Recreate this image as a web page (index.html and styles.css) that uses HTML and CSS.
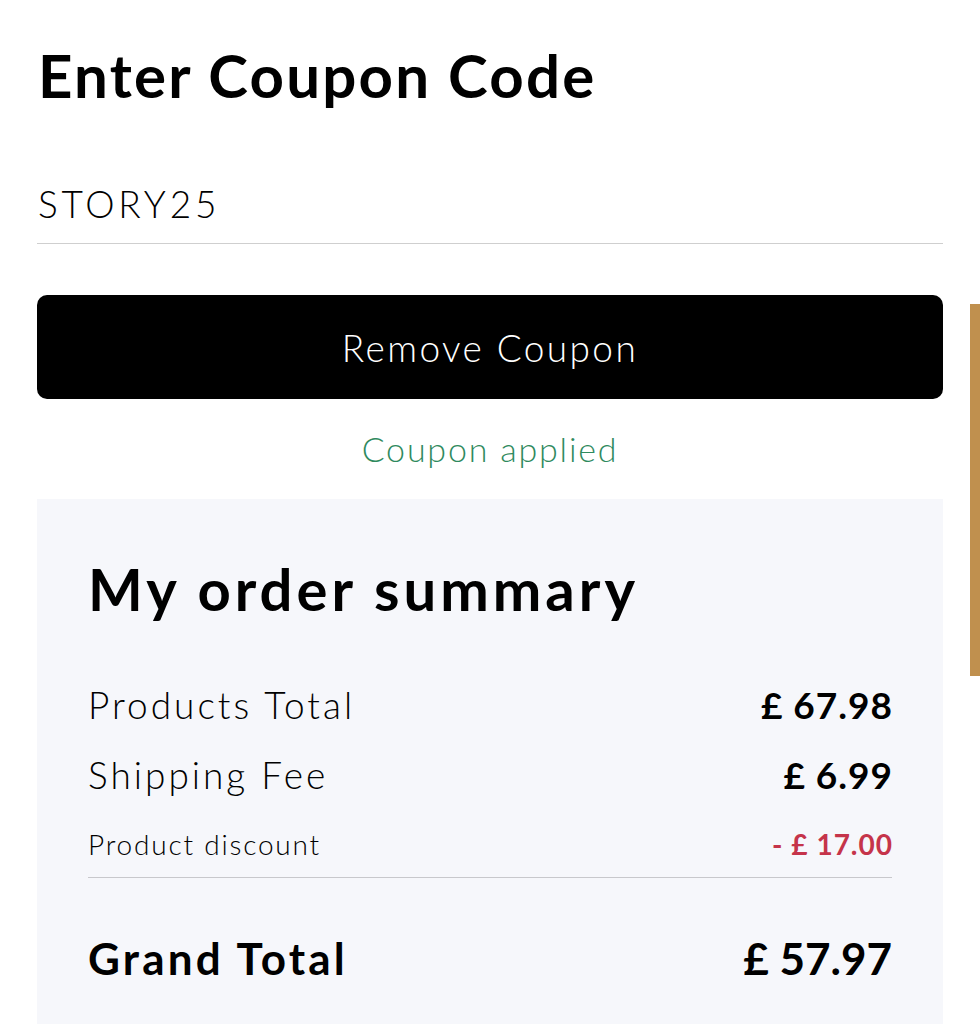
FILE: index.html
```html
<!DOCTYPE html>
<html>
	<head>
		<meta charset="utf-8">
		<title>Coupon</title>
		<link rel="stylesheet" href="styles.css">
	</head>
	<body>
		<div class="page">
			<!-- coupon -->
			<h1 class="couponTitle">Enter Coupon Code</h1>
			<div class="couponInput">STORY25</div>
			<button class="couponBtn">Remove Coupon</button>
			<p class="couponMsg">Coupon applied</p>

			<!-- summary -->
			<div class="summary">
				<h2 class="summaryTitle">My order summary</h2>
				<div class="row">
					<span>Products Total</span>
					<span class="val">£ 67.98</span>
				</div>
				<div class="row">
					<span>Shipping Fee</span>
					<span class="val">£ 6.99</span>
				</div>
				<div class="row small">
					<span>Product discount</span>
					<span class="val minus">- £ 17.00</span>
				</div>
				<div class="row total">
					<span>Grand Total</span>
					<span class="val">£ 57.97</span>
				</div>
			</div>
		</div>
		<div class="sideBar"></div>
	</body>
</html>
```

FILE: styles.css
```css
* {
	margin: 0;
	padding: 0;
	box-sizing: border-box;
}

body {
	background: #ffffff;
	font-family: Lato, "Open Sans", sans-serif;
	color: #000000;
}

.page {
	width: 906px;
	margin-left: 37px;
	padding-top: 40px;
}

.couponTitle {
	font-size: 60px;
	font-weight: 700;
	line-height: 70px;
	letter-spacing: 2.2px;
	padding-left: 1px;
}

.couponInput {
	margin-top: 74px;
	height: 60px;
	padding-left: 1px;
	font-size: 37px;
	font-weight: 300;
	line-height: 40px;
	letter-spacing: 3.8px;
	border-bottom: 1px solid #cfcfcf;
}

.couponBtn {
	display: block;
	width: 100%;
	height: 104px;
	margin-top: 51px;
	border: none;
	border-radius: 10px;
	background: #000000;
	color: #ffffff;
	font-family: inherit;
	font-size: 37px;
	font-weight: 300;
	letter-spacing: 2.4px;
}

.couponMsg {
	margin-top: 28px;
	text-align: center;
	color: #2f8a5e;
	font-size: 34px;
	font-weight: 300;
	line-height: 44px;
	letter-spacing: 1.8px;
}

.summary {
	margin-top: 28px;
	background: #f6f7fb;
	padding: 52px 51px 60px;
	min-height: 560px;
}

.summaryTitle {
	font-size: 58px;
	font-weight: 700;
	line-height: 76px;
	letter-spacing: 4px;
	margin-bottom: 55px;
}

.row {
	display: flex;
	justify-content: space-between;
	align-items: baseline;
	font-size: 37px;
	font-weight: 300;
	letter-spacing: 3px;
	height: 70px;
}

.row .val {
	font-weight: 700;
	letter-spacing: 1px;
	margin-right: -1px;
}

.row.small {
	font-size: 28px;
	letter-spacing: 1.8px;
	height: 56px;
	padding-top: 5px;
	border-bottom: 1px solid #c8c8cc;
}

.row .minus {
	color: #c5344a;
}

.row.total {
	margin-top: 54px;
	font-size: 44px;
	font-weight: 700;
	letter-spacing: 3.2px;
}

.row.total .val {
	letter-spacing: 0;
	margin-right: 0;
}

.sideBar {
	position: absolute;
	right: 0;
	top: 304px;
	width: 10px;
	height: 372px;
	background: #c0904e;
}
```
